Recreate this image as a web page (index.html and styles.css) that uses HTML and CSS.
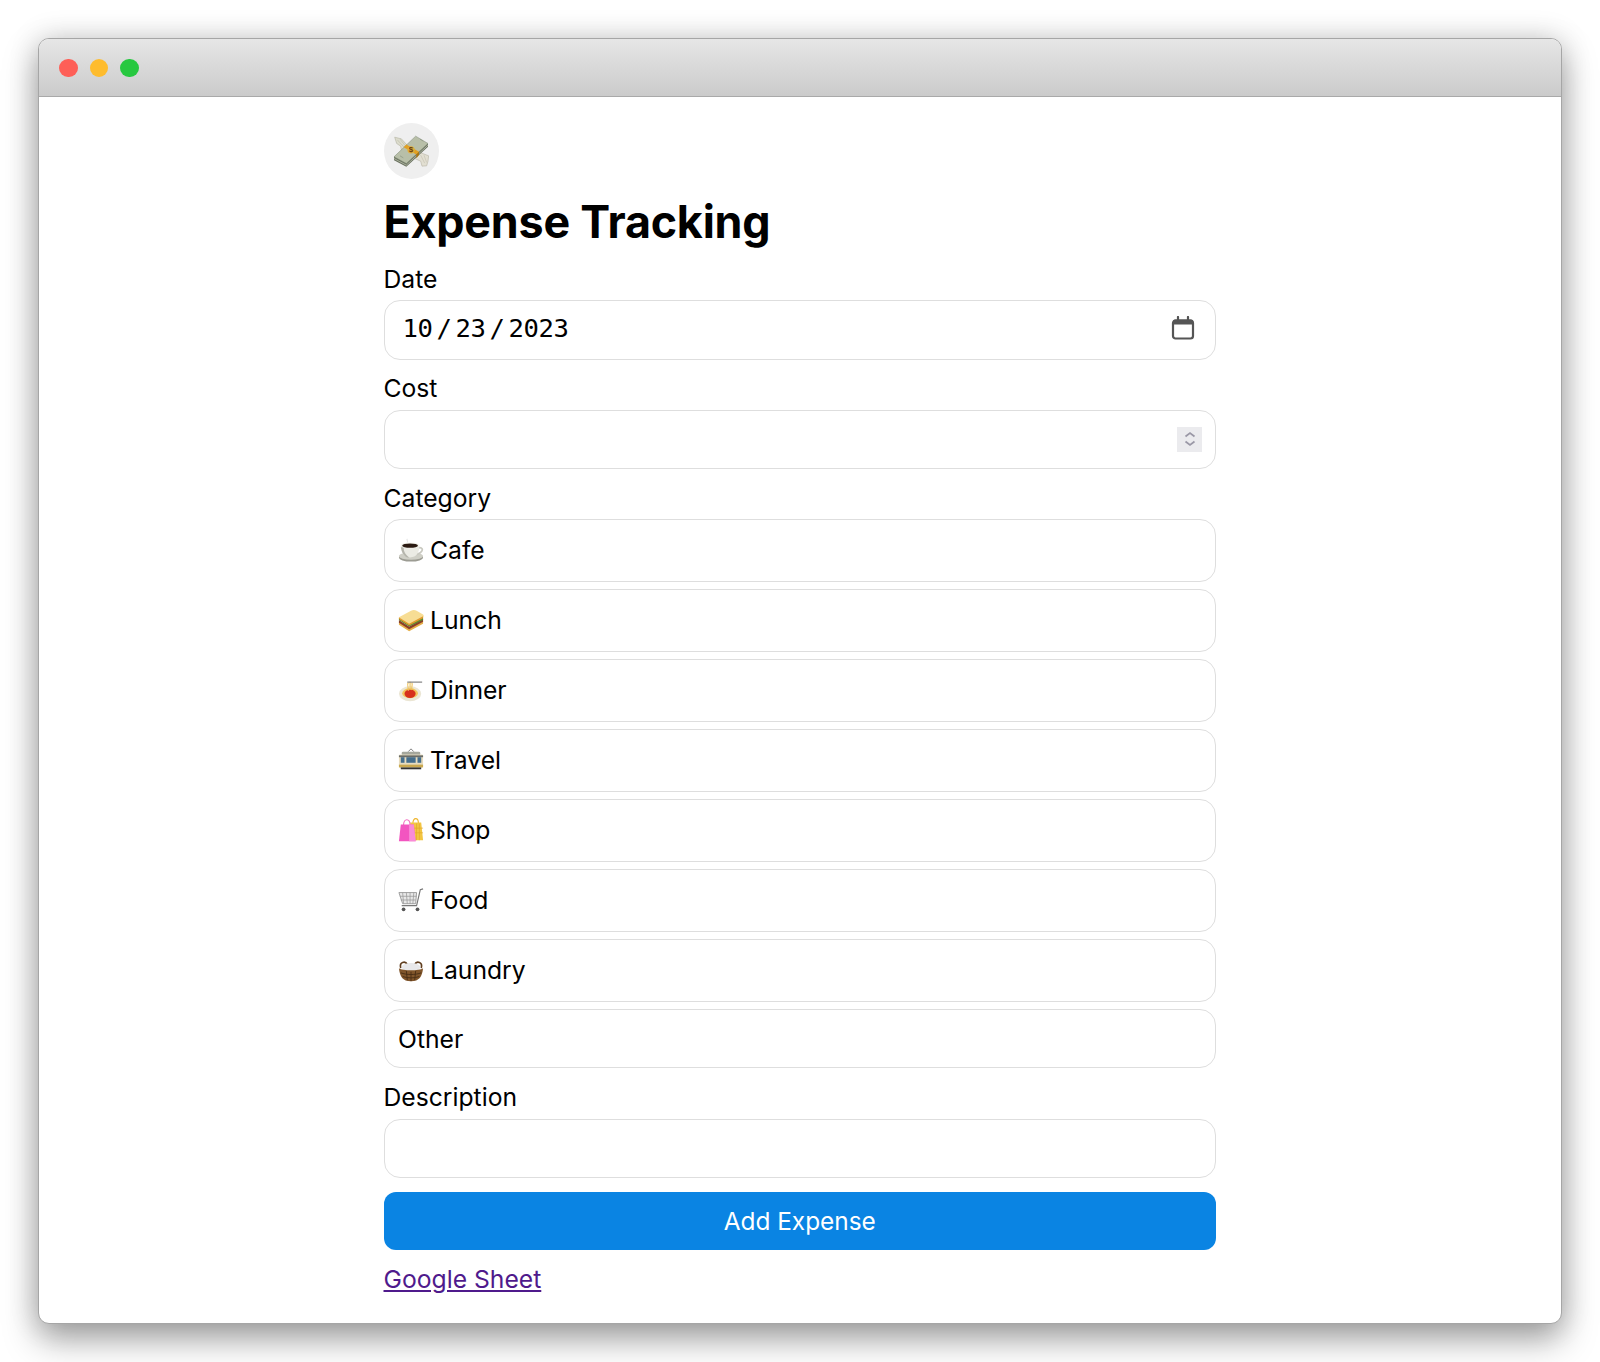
FILE: index.html
```html
<!DOCTYPE html>
<html lang="en">

<head>
	<meta charset="UTF-8">
	<meta name="viewport" content="width=device-width, initial-scale=1.0">
	<title>Expense Tracking</title>
	<link rel="stylesheet" href="styles.css">
</head>

<body>
	<div class="window">
		<div class="titlebar">
			<span class="dot red"></span>
			<span class="dot yellow"></span>
			<span class="dot green"></span>
		</div>
		<div class="page">
			<div class="avatar">
				<svg class="avatar-icon" viewBox="0 0 105 95">
					<path d="M2 6l20 5 26 28-16 12-10-6-2-12-12-8z" fill="#dcdccd" stroke="#a9a996" stroke-width="1.500" />
					<path d="M10 14l20 22M18 12l16 20" stroke="#b3b3a0" stroke-width="1.500" fill="none" />
					<path d="M104 62l-36-14-6 22 18 8 4 15 14-1 4-14z" fill="#e2dfd2" stroke="#aeaa9a" stroke-width="1.500" />
					<path d="M80 60l12 24M90 60l8 22" stroke="#bdb9a8" stroke-width="1.500" fill="none" />
					<path d="M0 65v10l37 20 65-60V25z" fill="#6c7462" />
					<path d="M0 70l37 20 65-60" fill="none" stroke="#c8cdb9" stroke-width="2" />
					<path d="M0 65L65 3l37 22-65 60z" fill="#b8bfa8" stroke="#7c8672" stroke-width="1.500" />
					<path d="M18 62l10 6M78 12l10 6" stroke="#8a9480" stroke-width="2" />
					<path d="M29 36l8-8 38 22-8 8z" fill="#e2a021" />
					<path d="M67 58l8-8v9l-8 10z" fill="#a9740f" />
					<circle cx="51" cy="44" r="11" fill="#dfb03c" />
					<text class="avatar-sign" x="51" y="52">$</text>
				</svg>
			</div>
			<h1>Expense Tracking</h1>
			<form class="form">
				<label>Date</label>
				<div class="field date-field">
					<span class="date-value">10 / 23 / 2023</span>
					<svg class="calendar" viewBox="0 0 24 24">
						<rect x="2" y="4.500" width="20" height="18" rx="2.500" fill="#fff" stroke="#555" stroke-width="2.200" />
						<path d="M2 5.500a2 2 0 0 1 2-2h16a2 2 0 0 1 2 2v3H2z" fill="#555" />
						<path d="M7 1v4M17 1v4" stroke="#555" stroke-width="2.200" stroke-linecap="round" />
					</svg>
				</div>

				<label>Cost</label>
				<div class="field cost-field">
					<div class="spinner">
						<svg viewBox="0 0 12 18">
							<path d="M1.500 6.500l4.500-3.500 4.500 3.500M1.500 11.500l4.500 3.500 4.500-3.500" fill="none" stroke="#9a98a6" stroke-width="1.700" />
						</svg>
					</div>
				</div>

				<label>Category</label>
				<div class="options">
					<button type="button" class="option">
						<svg class="emoji" viewBox="0 0 28 28">
							<path d="M10 2c-1 1.500 1 2.500 0 4" fill="none" stroke="#ddd" stroke-width="1" />
							<ellipse cx="14" cy="22" rx="13" ry="4.500" fill="#9c9c93" />
							<ellipse cx="14" cy="20.500" rx="13" ry="4" fill="#cfcfc6" />
							<path d="M21 12c5-2 7 2 3 5-2 1.500-4 2-6 2" fill="none" stroke="#c9c9c0" stroke-width="1.800" />
							<path d="M3 9h20c0 8-3 13-10 13S3 17 3 9z" fill="#ebebe4" />
							<path d="M3 11c2 10 6 11 9 11-4-3-6-6-6-11z" fill="#b5b5ac" />
							<ellipse cx="13" cy="9" rx="10" ry="3.200" fill="#f5f5ee" />
							<ellipse cx="13" cy="9.300" rx="8.500" ry="2.400" fill="#2b1a12" />
						</svg>
						<span>Cafe</span>
					</button>
					<button type="button" class="option">
						<svg class="emoji" viewBox="0 0 28 28">
							<path d="M1 16l11 7 15-8v3l-15 8-11-7z" fill="#e6b04a" />
							<path d="M1 14l11 7 15-8v3l-15 8-11-7z" fill="#8b3e2a" />
							<path d="M1 12l11 7 15-8v3l-15 7-11-7z" fill="#5d8a2e" />
							<path d="M1 11l13-7c2-1 4-1 6 0l7 4c1 1 1 2 0 3l-15 8z" fill="#f7dd94" />
							<path d="M1 11l11 7 15-8v2l-15 8-11-7z" fill="#e29b2e" />
						</svg>
						<span>Lunch</span>
					</button>
					<button type="button" class="option">
						<svg class="emoji" viewBox="0 0 28 28">
							<ellipse cx="13" cy="18" rx="12" ry="8" fill="#ebe6d4" />
							<ellipse cx="13" cy="17.500" rx="8.500" ry="5.500" fill="#f2c45a" />
							<ellipse cx="13" cy="18" rx="6" ry="4.500" fill="#d7301c" />
							<path d="M11 6c-2 3 1 6 0 9M13 5v9M15 6c1 3-1 6 0 8" fill="none" stroke="#eec25a" stroke-width="1.200" />
							<path d="M10 5.500h16" stroke="#777" stroke-width="1.200" />
						</svg>
						<span>Dinner</span>
					</button>
					<button type="button" class="option">
						<svg class="emoji" viewBox="0 0 28 28">
							<path d="M11 5l3-3 3 3" fill="none" stroke="#777" stroke-width="1" />
							<rect x="4" y="5" width="20" height="4" rx="1.500" fill="#a5a79c" />
							<rect x="1" y="8" width="26" height="14" rx="1.500" fill="#e7dcbf" />
							<rect x="1" y="9" width="26" height="2" fill="#6a6c68" />
							<rect x="3" y="11" width="4" height="6" fill="#456e8c" />
							<rect x="9" y="11" width="10" height="6" fill="#456e8c" />
							<rect x="21" y="11" width="4" height="6" fill="#456e8c" />
							<rect x="1" y="19" width="26" height="3" fill="#caa94f" />
							<rect x="3" y="22" width="22" height="2" fill="#333" />
						</svg>
						<span>Travel</span>
					</button>
					<button type="button" class="option">
						<svg class="emoji" viewBox="0 0 28 28">
							<path d="M16 7c0-7 6-7 6 0" fill="none" stroke="#eeb52e" stroke-width="1.200" />
							<path d="M13 6h12l2 19H15z" fill="#f3c542" />
							<path d="M20 7v18M23 7v18M15 12h12M15 17h12" stroke="#e2a428" stroke-width=".7" />
							<path d="M6 9c0-8 7-8 7 0" fill="none" stroke="#f26cc0" stroke-width="1.200" />
							<path d="M3 8h14l2 18H1z" fill="#f255c0" />
							<path d="M12 8h5l2 18h-7z" fill="#f98bd6" />
						</svg>
						<span>Shop</span>
					</button>
					<button type="button" class="option">
						<svg class="emoji" viewBox="0 0 28 28">
							<path d="M1 6h19l-1 12H5z" fill="#e8e8e8" stroke="#999" stroke-width="1" />
							<path d="M5 6l1 12M9 6l1 12M13 6v12M17 6l-1 12M2 10h18M3 14h16" stroke="#999" stroke-width=".8" />
							<path d="M27 2l-3 1-4 17H4" fill="none" stroke="#777" stroke-width="1.200" />
							<circle cx="6" cy="24" r="2" fill="#555" />
							<circle cx="21" cy="24" r="2" fill="#555" />
						</svg>
						<span>Food</span>
					</button>
					<button type="button" class="option">
						<svg class="emoji" viewBox="0 0 28 28">
							<path d="M3 12c-2-7 5-8 7-4M25 12c2-7-5-8-7-4" fill="none" stroke="#5f3d1e" stroke-width="1.800" />
							<ellipse cx="14" cy="11" rx="10" ry="4.500" fill="#e8e8ea" />
							<path d="M1 12c4 3 22 3 26 0-1 9-4 14-13 14S2 21 1 12z" fill="#80552a" />
							<path d="M3 17c6 2.500 16 2.500 22 0M5 21c5 2 13 2 18 0M9 15l1 10M14 16v10M19 15l-1 10" stroke="#4a2e14" stroke-width="1" fill="none" />
						</svg>
						<span>Laundry</span>
					</button>
					<button type="button" class="option other">
						<span>Other</span>
					</button>
				</div>

				<label>Description</label>
				<div class="field"></div>

				<button type="button" class="submit">Add Expense</button>
			</form>
			<a class="sheet-link" href="#">Google Sheet</a>
		</div>
	</div>
</body>

</html>
```

FILE: styles.css
```css
html,
body {
	margin: 0;
	background-color: #fff;
}

body {
	height: 1362px;
	padding: 38px 38px 0;
	box-sizing: border-box;
	font-family: Inter, "Liberation Sans", sans-serif;
	font-size: 24.700px;
	color: #000;
	overflow: hidden;
}

.window {
	width: 1524px;
	height: 1286px;
	box-sizing: border-box;
	border: 1.500px solid #a6a6a6;
	border-radius: 11px;
	background-color: #fff;
	box-shadow: 0 16px 34px rgba(0, 0, 0, .34), 0 0 30px rgba(0, 0, 0, .16);
	overflow: hidden;
}

.titlebar {
	display: flex;
	align-items: center;
	gap: 12px;
	height: 58px;
	padding: 1px 0 0 20px;
	box-sizing: border-box;
	border-bottom: 1px solid #a9a9a9;
	background: linear-gradient(#e6e6e6, #cbcbcb);
}

.dot {
	width: 18.500px;
	height: 18.500px;
	border-radius: 50%;
}

.red {
	background-color: #fe5f57;
}

.yellow {
	background-color: #febc2e;
}

.green {
	background-color: #27c840;
}

.page {
	width: 832.500px;
	margin-left: 344.500px;
	padding-top: 26px;
}

.avatar {
	display: flex;
	align-items: center;
	justify-content: center;
	width: 55px;
	height: 56px;
	border-radius: 50%;
	background-color: #efefef;
}

.avatar-icon {
	width: 35px;
	height: 32px;
}

.avatar-sign {
	font-family: "Liberation Sans", sans-serif;
	font-size: 24px;
	font-weight: 700;
	text-anchor: middle;
	fill: #6a3d10;
}

h1 {
	margin: 16px 0 14.500px;
	font-size: 44.800px;
	line-height: 54px;
	font-weight: 700;
	letter-spacing: -.2px;
}

.form {
	display: flex;
	flex-direction: column;
}

label {
	display: block;
	height: 31px;
	line-height: 31px;
	margin-bottom: 5.500px;
}

.field {
	display: flex;
	align-items: center;
	justify-content: space-between;
	height: 59.500px;
	box-sizing: border-box;
	margin-bottom: 13.500px;
	border: 1.500px solid #dedede;
	border-radius: 16px;
	background-color: #fff;
}

.date-field {
	padding: 0 20px 3px 18px;
}

.date-value {
	font-family: "DejaVu Sans Mono", "Liberation Mono", monospace;
	font-size: 25.600px;
	letter-spacing: -.4px;
	word-spacing: -11px;
}

.calendar {
	width: 24px;
	height: 24px;
}

.cost-field {
	justify-content: flex-end;
	padding-right: 13px;
}

.spinner {
	display: flex;
	align-items: center;
	justify-content: center;
	width: 25px;
	height: 25px;
	background-color: #ebebee;
}

.spinner svg {
	width: 12px;
	height: 18px;
}

.options {
	display: flex;
	flex-direction: column;
	gap: 7.500px;
	margin-bottom: 14px;
}

.option {
	display: flex;
	align-items: center;
	gap: 6px;
	height: 62.500px;
	padding: 0 13.500px;
	border: 1.500px solid #dedede;
	border-radius: 16px;
	background-color: #fff;
	font: inherit;
	color: #000;
	text-align: left;
}

.other {
	height: 59px;
}

.emoji {
	width: 26px;
	height: 26px;
	flex: none;
}

.submit {
	height: 58px;
	border: 0;
	border-radius: 12px;
	background-color: #0a84e3;
	font: inherit;
	font-size: 24.400px;
	color: #fff;
}

.sheet-link {
	display: block;
	width: fit-content;
	margin-top: 14.500px;
	line-height: 31px;
	color: #4f1a8c;
}
```
